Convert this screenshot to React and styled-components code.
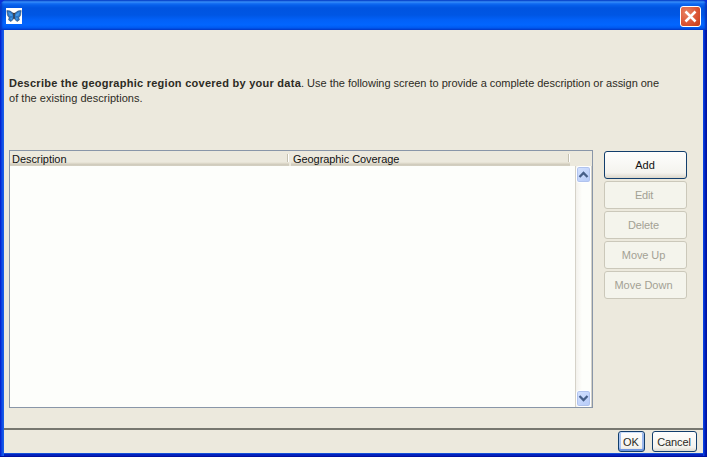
import React from "react";
import styled, { createGlobalStyle } from "styled-components";

const Global = createGlobalStyle`
  *, *::after { box-sizing: border-box; }
  body { margin: 0; background: #0831d9; overflow: hidden; }
  button { font: inherit; padding: 0; margin: 0; }
`;

const Window = styled.div`
  width: 707px;
  height: 457px;
  display: flex;
  flex-direction: column;
  border-radius: 7px 6px 0 0;
  overflow: hidden;
  font: 11px/15px "Liberation Sans", Arial, sans-serif;
  color: #2c2b24;
  background: #0a38d8;
`;

const TitleBar = styled.header`
  height: 30px;
  flex: none;
  display: flex;
  align-items: center;
  justify-content: space-between;
  padding: 3px 6px 0 6px;
  background: linear-gradient(
    #0a4fd0 0, #3b92fb 2px, #1b74f4 3px, #0660ec 5px, #0054e0 8px,
    #0056e4 15px, #0261f8 20px, #0266ff 25px, #0058ee 28px, #0144d0 30px
  );
  box-shadow: inset 2px 0 2px #0638c4, inset -2px 0 2px #0634be;
`;

const AppIcon = styled.svg`
  width: 16px;
  height: 16px;
  margin-bottom: 1px;
  background: #fff;
`;

const CloseButton = styled.button`
  width: 21px;
  height: 21px;
  border: 1px solid #fff;
  border-radius: 3px;
  display: flex;
  align-items: center;
  justify-content: center;
  background: radial-gradient(circle at 30% 30%, #e88464 0, #dc5636 55%, #c43a14 100%);
`;

const Frame = styled.div`
  flex: 1;
  min-height: 0;
  padding: 0 4px 3px;
  background: linear-gradient(90deg, #0018c4 0, #0830dc 1px, #0c4ce4 2px, #1c60e8 4px, #1c60e8 50%, #0a48e4 calc(100% - 4px), #0838dc calc(100% - 3px), #0020b8 calc(100% - 2px), #00109c 100%);
  border-bottom: 1px solid #00109c;
`;

const Content = styled.main`
  height: 100%;
  display: flex;
  flex-direction: column;
  background: #ece9dd;
  box-shadow: 0 1px 0 #1450d8, 0 3px 0 #0420bc;
`;

const Intro = styled.p`
  margin: 0;
  height: 120px;
  padding: 46px 0 0 5px;
  white-space: nowrap;
`;

const Text = styled.span`
  display: inline-block;
  white-space: nowrap;
  letter-spacing: ${(p) => p.$ls || 0}px;
`;

const Lead = styled.b`
  letter-spacing: 0.26px;
`;

const Body = styled.section`
  display: flex;
  gap: 10px;
  padding-left: 5px;
  flex: 1;
`;

const Table = styled.div`
  width: 584px;
  height: 258px;
  display: flex;
  flex-direction: column;
  border: 1px solid #8996a8;
  background: #fdfefb;
`;

const HeaderRow = styled.div`
  height: 15px;
  flex: none;
  display: flex;
  background: #ece9dd;
`;

const HeaderCell = styled.div`
  width: ${(p) => p.$w}px;
  height: 15px;
  padding-left: 2px;
  display: flex;
  justify-content: space-between;
  line-height: 17px;
  color: #111;
  background: linear-gradient(transparent 11px, #e2decf 12px, #d6d1c2 13px, #cbc7b8 14px, #dad6c8 15px);
  margin-right: 2px;

  &::after {
    content: "";
    width: 2px;
    height: 8px;
    margin-top: 3px;
    border-left: 1px solid #c5c1b1;
    border-right: 1px solid #fff;
  }
`;

const TableBody = styled.div`
  flex: 1;
  display: flex;
  justify-content: flex-end;
`;

const ScrollBar = styled.div`
  width: 17px;
  display: flex;
  flex-direction: column;
  justify-content: space-between;
  border-left: 1px solid #d5d2c8;
  border-right: 1px solid #d3d1c8;
  background: linear-gradient(90deg, #f3f1ec, #fdfefb 6px);
`;

const ScrollButton = styled.button`
  width: 15px;
  height: 17px;
  display: flex;
  align-items: center;
  justify-content: center;
  border: 1px solid #fff;
  border-radius: 3px;
  background: linear-gradient(135deg, #d4e2ff, #b5caf8);
  box-shadow: inset 0 0 0 1px #b0c3ee;
`;

const Side = styled.div`
  display: flex;
  flex-direction: column;
  width: 85px;
`;

const SideButton = styled.button`
  width: 85px;
  height: 30px;
  border: 1px solid #ece9dd;
  background: transparent;
  display: flex;
`;

const Face = styled.span`
  flex: 1;
  display: flex;
  align-items: center;
  justify-content: center;
  padding-right: ${(p) => p.$pr || 0}px;
  padding-top: 1px;
  border-radius: 3px;
  border: 1px solid ${(p) => (p.$on ? "#123e6c" : "#cbc8ba")};
  color: ${(p) => (p.$on ? "#111" : "#a3a194")};
  background: ${(p) => (p.$on ? "linear-gradient(#fefefd, #f4f3ee 80%, #dcd7cb)" : "#f4f4ec")};
`;

const Footer = styled.footer`
  height: 25px;
  flex: none;
  display: flex;
  justify-content: flex-end;
  gap: 7px;
  padding: 1px 6px 0 0;
  border-top: 2px solid #77776f;
`;

const FooterButton = styled.button`
  width: ${(p) => p.$w}px;
  height: 21px;
  display: flex;
  align-items: center;
  justify-content: center;
  padding: 1px 1px 0 0;
  border: 1px solid #123e6c;
  border-radius: 3px;
  color: #2c2b24;
  background: linear-gradient(#fefefd, #f4f3ee 80%, #dfdbd0);
  box-shadow: ${(p) => (p.$focus ? "inset 0 1px 0 #cee0fb, inset 0 -2px 0 #7197df, inset 2px 0 0 #a8c4f2, inset -2px 0 0 #9bb8ec" : "none")};
`;

const Butterfly = () => (
  <AppIcon viewBox="0 0 16 16">
    <path d="M.8 2.6Q5 2 7.3 6L8 8 8.7 6Q11 2 15.2 2.6L14.6 7Q14 9 12.8 9.2L13.4 12 11 13.5 9 11.5 8 9 7 11.5 5 13.5 2.6 12 3.2 9.2Q2 9 1.4 7Z" fill="#2b76c6" stroke="#34496c" strokeWidth=".6" />
    <path d="M2.2 3.8 6 6.2 6.5 8.2 3.6 7.8ZM13.8 3.8 10 6.2 9.5 8.2 12.4 7.8ZM4.2 10 6.5 9.4 5.2 12.2ZM11.8 10 9.5 9.4 10.8 12.2Z" fill="#4598e6" />
    <path d="M6.8 4.5 8 6.5 9.2 4.5M8 6.5V11" fill="none" stroke="#27262e" strokeWidth="1" />
  </AppIcon>
);

const Chevron = ({ down }) => (
  <svg width="11" height="7" viewBox="0 0 11 7">
    <path d={down ? "M1.5 1 5.5 5 9.5 1" : "M1.5 6 5.5 2 9.5 6"} fill="none" stroke="#465f88" strokeWidth="2.3" />
  </svg>
);

const actions = [
  { label: "Add", on: true, ls: 0, pr: 1 },
  { label: "Edit", ls: -0.2, pr: 3 },
  { label: "Delete", ls: -0.1, pr: 4 },
  { label: "Move Up", ls: -0.1, pr: 4 },
  { label: "Move Down", ls: 0, pr: 4 },
];

export default function App() {
  return (
    <>
      <Global />
      <Window>
        <TitleBar>
          <Butterfly />
          <CloseButton aria-label="Close">
            <svg width="15" height="15" viewBox="0 0 15 15">
              <path d="M2.5 2.5 12.5 12.5M12.5 2.5 2.5 12.5" stroke="#fff" strokeWidth="2.5" />
            </svg>
          </CloseButton>
        </TitleBar>
        <Frame>
          <Content>
            <Intro>
              <Lead>Describe the geographic region covered by your data</Lead>
              <Text $ls={-0.02}>. Use the following screen to provide a complete description or assign one</Text>
              <br />
              <Text $ls={0.03}>of the existing descriptions.</Text>
            </Intro>
            <Body>
              <Table>
                <HeaderRow>
                  <HeaderCell $w={279}><Text $ls={-0.05}>Description</Text></HeaderCell>
                  <HeaderCell $w={279}><Text $ls={-0.07}>Geographic Coverage</Text></HeaderCell>
                </HeaderRow>
                <TableBody>
                  <ScrollBar>
                    <ScrollButton aria-label="Scroll up"><Chevron /></ScrollButton>
                    <ScrollButton aria-label="Scroll down"><Chevron down /></ScrollButton>
                  </ScrollBar>
                </TableBody>
              </Table>
              <Side>
                {actions.map((a) => (
                  <SideButton key={a.label} disabled={!a.on}>
                    <Face $on={a.on} $pr={a.pr}><Text $ls={a.ls}>{a.label}</Text></Face>
                  </SideButton>
                ))}
              </Side>
            </Body>
            <Footer>
              <FooterButton $w={27} $focus><Text>OK</Text></FooterButton>
              <FooterButton $w={45}><Text $ls={-0.1}>Cancel</Text></FooterButton>
            </Footer>
          </Content>
        </Frame>
      </Window>
    </>
  );
}
